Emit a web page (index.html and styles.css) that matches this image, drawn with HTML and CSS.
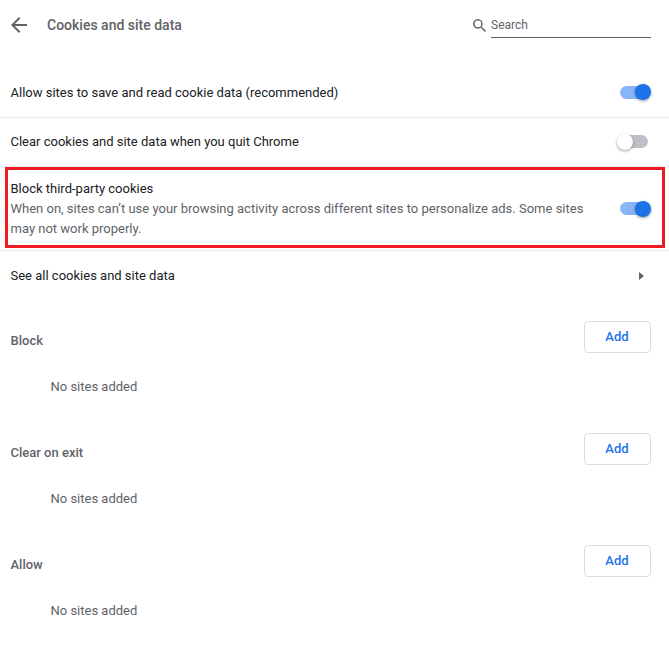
FILE: index.html
```html
<!DOCTYPE html>
<html lang="en">
<head>
  <meta charset="UTF-8" />
  <title>Cookies and site data</title>
  <link rel="stylesheet" href="styles.css">
</head>
<body>
  <header class="top">
    <a href="#" class="back" aria-label="Back">
      <svg width="16" height="16" viewBox="0 0 16 16"><path d="M16 7H3.8l5.6-5.6L8 0 0 8l8 8 1.4-1.4L3.8 9H16z"/></svg>
    </a>
    <h1>Cookies and site data</h1>
    <div class="search">
      <svg width="13" height="13" viewBox="0 0 13 13"><path d="M9.3 8.2h-.6l-.2-.2a4.8 4.8 0 1 0-.5.5l.2.2v.6l3.7 3.7 1.1-1.1zM5 8.2a3.3 3.3 0 1 1 0-6.6 3.3 3.3 0 0 1 0 6.6z"/></svg>
      <span class="search-box">Search</span>
    </div>
  </header>

  <div class="row first">
    <span>Allow sites to save and read cookie data (recommended)</span>
    <span class="toggle on"></span>
  </div>
  <div class="row line">
    <span>Clear cookies and site data when you quit Chrome</span>
    <span class="toggle"></span>
  </div>
  <div class="row marked">
    <div class="text">
      <div>Block third-party cookies</div>
      <div class="sub">When on, sites can’t use your browsing activity across different sites to personalize ads. Some sites may not work properly.</div>
    </div>
    <span class="toggle on"></span>
  </div>
  <div class="row link">
    <span>See all cookies and site data</span>
    <span class="arrow"></span>
  </div>

  <section class="list">
    <div class="list-head"><h2>Block</h2><button>Add</button></div>
    <p class="empty">No sites added</p>
  </section>
  <section class="list">
    <div class="list-head"><h2>Clear on exit</h2><button>Add</button></div>
    <p class="empty">No sites added</p>
  </section>
  <section class="list">
    <div class="list-head"><h2>Allow</h2><button>Add</button></div>
    <p class="empty">No sites added</p>
  </section>
</body>
</html>
```

FILE: styles.css
```css
* {
  margin: 0;
  padding: 0;
  box-sizing: border-box;
}

body {
  font-family: Roboto, sans-serif;
  font-size: 13px;
  color: #202124;
  background: #ffffff;
}

.top {
  display: flex;
  align-items: center;
  height: 50px;
  padding: 0 18px 0 11px;
}

.back {
  display: flex;
  width: 36px;
}

.back svg {
  fill: #5f6368;
}

.top h1 {
  flex: 1;
  font-size: 14px;
  font-weight: 500;
  color: #5f6368;
}

.search {
  display: flex;
  align-items: center;
  gap: 5px;
}

.search svg {
  fill: #5f6368;
}

.search-box {
  width: 160px;
  height: 25px;
  line-height: 24px;
  font-size: 12px;
  color: #5f6368;
  border-bottom: 1px solid #5f6368;
}

.row {
  display: flex;
  align-items: center;
  justify-content: space-between;
  padding: 0 21px 0 10.5px;
}

.first {
  height: 68px;
  padding-top: 17px;
  border-bottom: 1px solid #e8eaed;
}

.line {
  height: 49px;
  padding-bottom: 1px;
  border-bottom: 1px solid #e8eaed;
}

.marked {
  height: 81px;
  margin: 0 4px 0 5px;
  padding: 2px 14px 0 2.5px;
  border: 3px solid #ed1c24;
  line-height: 20px;
}

.marked .text {
  width: 580px;
}

.sub {
  color: #5f6368;
}

.link {
  height: 50px;
  margin-top: 2px;
  border-top: 1px solid #e8eaed;
}

.toggle {
  position: relative;
  flex-shrink: 0;
  width: 28px;
  height: 13px;
  border-radius: 7px;
  background: #bdc1c6;
}

.toggle::after {
  content: "";
  position: absolute;
  left: -3px;
  top: -1.5px;
  width: 16px;
  height: 16px;
  border-radius: 50%;
  background: #ffffff;
  box-shadow: 0 1px 3px rgba(0, 0, 0, 0.4);
}

.toggle.on {
  background: #8ab4f8;
}

.toggle.on::after {
  left: auto;
  right: -3px;
  background: #1a73e8;
}

.arrow {
  width: 0;
  height: 0;
  margin-right: 4px;
  border-left: 5px solid #5f6368;
  border-top: 4.5px solid transparent;
  border-bottom: 4.5px solid transparent;
}

.list {
  height: 112px;
  padding: 0 18px 0 10.5px;
}

.list-head {
  display: flex;
  align-items: center;
  justify-content: space-between;
  padding-top: 21px;
}

.list-head h2 {
  margin-top: 6px;
  font-size: 13px;
  font-weight: 500;
  color: #5f6368;
}

.list-head button {
  width: 67px;
  height: 32px;
  padding: 0 1px 2px 0;
  font-family: Roboto, sans-serif;
  font-size: 13px;
  font-weight: 500;
  color: #1a73e8;
  background: #ffffff;
  border: 1px solid #dadce0;
  border-radius: 4px;
}

.empty {
  margin-top: 26px;
  padding-left: 40px;
  color: #5f6368;
}
```
